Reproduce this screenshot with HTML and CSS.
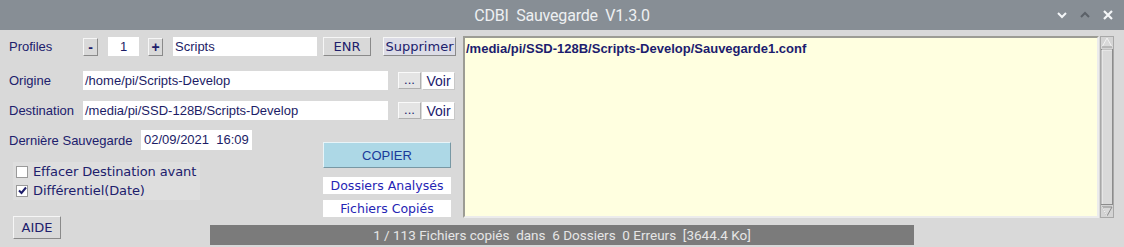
FILE: index.html
```html
<!DOCTYPE html>
<html lang="fr">
<head>
  <meta charset="UTF-8">
  <title>CDBI Sauvegarde V1.3.0</title>
  <link rel="stylesheet" href="styles.css">
</head>
<body>
  <div class="titlebar">
    <span></span>
    <span class="title">CDBI  Sauvegarde  V1.3.0</span>
    <div class="controls">
      <svg width="10" height="8" viewBox="0 0 10 8"><path d="M1 2 L5 6 L9 2" fill="none" stroke="#f4f6f8" stroke-width="2"/></svg>
      <svg width="10" height="8" viewBox="0 0 10 8"><path d="M1 6 L5 2 L9 6" fill="none" stroke="#5b6168" stroke-width="2"/></svg>
      <svg width="10" height="10" viewBox="0 0 10 10"><path d="M1 1 L9 9 M9 1 L1 9" fill="none" stroke="#f4f6f8" stroke-width="2.2"/></svg>
    </div>
  </div>

  <div class="window">
    <div class="form">
      <div class="row row-profiles">
        <span class="label">Profiles</span>
        <button class="btn small">-</button>
        <span class="entry num">1</span>
        <button class="btn small plus">+</button>
        <span class="entry profile">Scripts</span>
        <button class="btn enr">ENR</button>
        <button class="btn suppr">Supprimer</button>
      </div>
      <div class="row row-path">
        <span class="label">Origine</span>
        <span class="entry path">/home/pi/Scripts-Develop</span>
        <button class="btn dots">...</button>
        <button class="btn voir">Voir</button>
      </div>
      <div class="row row-path row-dest">
        <span class="label">Destination</span>
        <span class="entry path">/media/pi/SSD-128B/Scripts-Develop</span>
        <button class="btn dots">...</button>
        <button class="btn voir">Voir</button>
      </div>
      <div class="bottom">
        <div class="bottom-left">
          <div class="row row-date">
            <span class="label">Dernière Sauvegarde</span>
            <span class="entry date">02/09/2021  16:09</span>
          </div>
          <div class="checks">
            <label class="check"><span class="box"></span>Effacer Destination avant</label>
            <label class="check"><span class="box">
              <svg width="9" height="9" viewBox="0 0 9 9"><path d="M1 4.5 L3.5 7 L8 1.5" fill="none" stroke="#1e1e6a" stroke-width="2"/></svg>
            </span>Différentiel(Date)</label>
          </div>
        </div>
        <div class="bottom-right">
          <button class="btn copier">COPIER</button>
          <span class="info">Dossiers Analysés</span>
          <span class="info info-last">Fichiers Copiés</span>
        </div>
      </div>
    </div>

    <div class="log">/media/pi/SSD-128B/Scripts-Develop/Sauvegarde1.conf</div>

    <div class="scroll">
      <svg width="14" height="182" viewBox="0 0 14 182">
        <rect x="0.5" y="0.5" width="13" height="181" fill="#d4d4d4" stroke="#a8a8a8"/>
        <path d="M2 11 L7 2 L12 11 Z" fill="#d9d9d9" stroke="#f2f2f2"/>
        <path d="M12 11 L2 11" stroke="#8c8c8c"/>
        <rect x="1.5" y="13.5" width="11" height="155" fill="#d9d9d9" stroke="#8c8c8c"/>
        <path d="M2 14 L2 168 M2 14 L12 14" stroke="#f4f4f4"/>
        <path d="M2 171 L12 171 L7 180 Z" fill="#d9d9d9" stroke="#8c8c8c"/>
        <path d="M2 171 L7 180" stroke="#f2f2f2"/>
      </svg>
    </div>

    <div class="aide-cell">
      <button class="btn aide">AIDE</button>
    </div>

    <div class="status">1 / 113 Fichiers copiés  dans  6 Dossiers  0 Erreurs  [3644.4 Ko]</div>
  </div>
</body>
</html>
```

FILE: styles.css
```css
body {
  margin: 0;
  width: 1124px;
  height: 247px;
  overflow: hidden;
  background-color: #d9d9d9;
  font-family: "Liberation Sans", Arial, sans-serif;
  font-size: 13px;
  color: #20206c;
}
.titlebar {
  height: 30px;
  background-color: #878e95;
  display: grid;
  grid-template-columns: 1fr auto 1fr;
  align-items: center;
}
.title {
  color: #eef0f2;
  font-family: "Roboto", sans-serif;
  font-size: 16px;
  letter-spacing: -0.2px;
  white-space: pre;
  padding-top: 1px;
}
.controls {
  justify-self: end;
  display: flex;
  align-items: center;
  gap: 13px;
  padding-right: 11px;
}
.window {
  display: grid;
  grid-template-columns: 210px 253px 636px 1fr;
  grid-template-rows: 190px 27px;
  grid-template-areas:
    "form form log scroll"
    "aide status status status";
}
.form {
  grid-area: form;
  padding-top: 7px;
}
.row {
  display: flex;
  align-items: center;
  height: 19px;
}
.label {
  width: 74px;
  padding-left: 9px;
  white-space: nowrap;
}
.entry {
  background: #ffffff;
  color: #1c1c66;
  height: 19px;
  line-height: 19px;
  padding-left: 2px;
  box-sizing: border-box;
  white-space: pre;
}
.btn {
  font-family: "DejaVu Sans", sans-serif;
  font-size: 13px;
  color: #20206c;
  background: #d9d9d9;
  border: 1px solid;
  border-color: #f6f6f6 #8a8a8a #8a8a8a #f6f6f6;
  padding: 0;
  margin: 0;
  box-sizing: border-box;
  line-height: 1;
}
.small {
  width: 15px;
  height: 18px;
  font-weight: bold;
  font-family: "Liberation Sans", sans-serif;
  font-size: 14px;
}
.num {
  width: 31px;
  margin-left: 10px;
  text-align: center;
  padding-left: 0;
}
.plus {
  margin-left: 9px;
}
.profile {
  width: 144px;
  margin-left: 10px;
}
.enr {
  width: 48px;
  height: 19px;
  margin-left: 6px;
}
.suppr {
  width: 73px;
  height: 19px;
  margin-left: 12px;
  background: #dcdce6;
}
.row-path {
  margin-top: 15px;
}
.row-dest {
  margin-top: 11px;
}
.path {
  width: 305px;
}
.dots {
  width: 23px;
  height: 17px;
  margin-left: 10px;
  background: #e4e4e4;
  border-color: #fafafa #b0b0b0 #b0b0b0 #fafafa;
  font-family: "Liberation Sans", sans-serif;
  font-size: 13px;
  padding-bottom: 3px;
}
.voir {
  width: 33px;
  height: 18px;
  margin-left: 1px;
  background: #ffffff;
  border-color: #ffffff #c8c8c8 #c8c8c8 #ffffff;
  font-size: 14px;
  font-family: "Liberation Sans", sans-serif;
}
.bottom {
  display: grid;
  grid-template-columns: 323px 128px;
  margin-top: 10px;
}
.row-date {
  height: 20px;
}
.row-date .label {
  width: 132px;
}
.date {
  width: 111px;
  height: 20px;
  line-height: 20px;
  padding-left: 3px;
}
.checks {
  margin-top: 12px;
  margin-left: 13px;
  width: 187px;
  background: #dedede;
}
.check {
  display: flex;
  align-items: center;
  height: 19px;
  font-family: "DejaVu Sans", sans-serif;
  font-size: 13px;
  letter-spacing: -0.1px;
  white-space: nowrap;
}
.box {
  width: 10px;
  height: 10px;
  margin-left: 3px;
  margin-right: 5px;
  background: #ffffff;
  border: 1px solid #9a9a9a;
  display: flex;
  align-items: center;
  justify-content: center;
}
.bottom-right {
  display: flex;
  flex-direction: column;
}
.copier {
  margin-top: 12px;
  height: 26px;
  background: #add8e6;
  color: #1a3a9a;
  font-family: "Liberation Sans", sans-serif;
  font-size: 13px;
  border-color: #e8f4f8 #7898a4 #7898a4 #e8f4f8;
}
.info {
  margin-top: 9px;
  height: 17px;
  line-height: 17px;
  background: #ffffff;
  color: #2424b4;
  text-align: center;
  font-family: "DejaVu Sans", sans-serif;
  font-size: 12.5px;
}
.info-last {
  margin-top: 6px;
}
.log {
  grid-area: log;
  margin-top: 6px;
  height: 182px;
  box-sizing: border-box;
  background: #ffffe0;
  border: 2px solid;
  border-color: #9c9c94 #ececec #ececec #9c9c94;
  padding: 3px 0 0 1px;
  font-weight: bold;
  color: #1c1c6e;
}
.scroll {
  grid-area: scroll;
  margin-top: 6px;
  padding-left: 1px;
}
.aide-cell {
  grid-area: aide;
}
.aide {
  margin-top: -9px;
  margin-left: 13px;
  width: 48px;
  height: 23px;
}
.status {
  grid-area: status;
  margin-top: 5px;
  width: 704px;
  height: 20px;
  line-height: 20px;
  background: #7b7b7b;
  color: #e6e6e6;
  text-align: center;
  font-family: "Roboto", sans-serif;
  font-size: 13.5px;
  white-space: pre;
}
```
